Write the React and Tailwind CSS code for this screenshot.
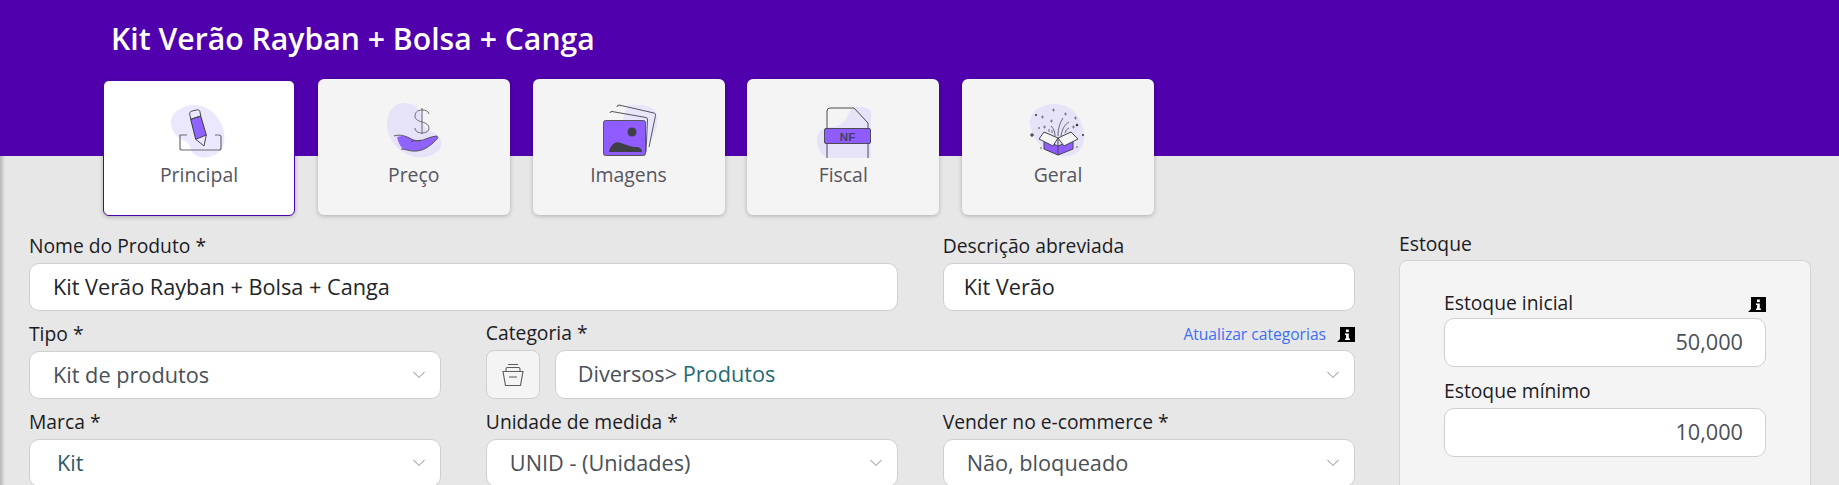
const Chevron = () => (
  <svg width="14" height="8" viewBox="0 0 14 8" fill="none" stroke="#b4b7bb" strokeWidth="1.2" className="shrink-0">
    <path d="M1.5 1l5.5 5.5L12.5 1" />
  </svg>
);

const InfoIcon = () => (
  <svg width="18" height="17" viewBox="0 0 18 17" className="shrink-0">
    <path d="M3 1h15v15H0l3-3z" fill="#000" />
    <rect x="9" y="3.500" width="2.800" height="2.600" fill="#fff" />
    <path d="M8 7.500h3.800v5h1.100v1.500H8v-1.500h1.100V9H8z" fill="#fff" />
  </svg>
);

const PenIcon = () => (
  <svg width="64" height="60" viewBox="0 0 64 60" fill="none">
    <path d="M17 6c11-5 26-1 34 11 7 10 9 24 3 32-7 8-20 10-27 4-4-3-3-10-9-13C9 37 3 28 4 20 5 13 10 9 17 6z" fill="#ebe8fd" />
    <path d="M20 34h-7v13q0 2 2 2h37q2 0 2-2V36q0-2-2-2h-4M30 34h6" stroke="#6b6b70" strokeWidth="1.2" />
    <path d="M23.7 18.3L33.7 15l5.6 19-10.6 4.3z" fill="#8f63ff" stroke="#3d3d42" strokeWidth="1" />
    <path d="M22.7 13.3q-.5-2 1.5-3l6-1.5q2-.2 2.6 1.5l1 4.7-10 3.3z" fill="none" stroke="#4a4a4f" strokeWidth="1" />
    <path d="M28.7 38.3L37 45l2.3-11" stroke="#4a4a4f" strokeWidth="1" />
  </svg>
);

const MoneyIcon = () => (
  <svg width="64" height="60" viewBox="0 0 64 60" fill="none">
    <path d="M22 3c12 0 19 9 19 18 0 6 4 8 10 11 8 4 11 12 6 18-6 7-20 10-30 5C14 50 5 37 5 24 5 12 12 3 22 3z" fill="#e6e3f9" />
    <path d="M40 8v26M47 14c-1-3-3-4-7-4-5 0-7 3-7 6 0 4 4 5 7 6 4 1 7 3 7 6 0 3-3 5-7 5-4 0-7-2-7-5" stroke="#5b5b60" strokeWidth="0.9" />
    <path d="M15 37c5-2 9-1 13 1 3 2 6 4 9 3 6-1 12-5 18-5 1 2 0 3-2 5-5 5-11 10-20 10-3 0-7-1-12-2-4-4-5-8-6-12z" fill="#8f63ff" />
    <path d="M12 36c6-2 12 0 17 3 4 2 8 2 10 1M55 36c-6 0-12 4-18 5-3 0-7-1-8 1M19 49c5 0 10 3 16 2 9-1 15-7 20-12 1-1 1-2 0-3" stroke="#4a4a4f" strokeWidth="0.9" />
  </svg>
);

const ImagesIcon = () => (
  <svg width="64" height="60" viewBox="0 0 64 60" fill="none">
    <path d="M30 6c10-3 24-1 29 6 3 10 1 24-9 32-9 7-24 12-34 9z" fill="#e9e6fb" />
    <path d="M20 7q0-2 2-2l35 8q2 .5 1.500 2.500L52 47" stroke="#55555a" strokeWidth="1" />
    <path d="M13 13q0-1.500 2-1.500l34 6q2 .5 1.500 2.500L49 52" stroke="#55555a" strokeWidth="1" />
    <rect x="6.500" y="20.500" width="42" height="35" rx="2" fill="#8f5cff" stroke="#55555a" strokeWidth="1" />
    <circle cx="35" cy="32" r="4.500" fill="#3f3f46" />
    <path d="M12 52c1-6 6-12 12-9 6 2 10 4 15 4 4 0 6 2 6 5z" fill="#3f3f46" />
  </svg>
);

const NfIcon = () => (
  <svg width="64" height="60" viewBox="0 0 64 60" fill="none">
    <path d="M42 8c8-3 18 0 18 4v46H20C10 58 6 48 6 40c0-8 6-13 14-13 10 0 14-6 17-12 1-3 3-6 5-7z" fill="#e6e3f9" />
    <path d="M16 58V11q0-3 3-3h24l14 15v35" stroke="#4b4b50" strokeWidth="1" />
    <rect x="13.500" y="28.500" width="46" height="15" rx="1.500" fill="#8f5cff" stroke="#4b4b50" strokeWidth="1" />
    <text x="36.500" y="41" textAnchor="middle" fontFamily="'Liberation Sans', sans-serif" fontWeight="700" fontSize="11.500" fill="#45405a">NF</text>
  </svg>
);

const BoxIcon = () => (
  <svg width="64" height="60" viewBox="0 0 64 60" fill="none">
    <path d="M27 4c12-1 23 6 28 18 5 12 4 23-2 29-7 7-19 7-29 2C14 48 6 36 4 24 3 12 14 5 27 4z" fill="#e6e3f9" />
    <path d="M18 40v9l14 6 15-6v-9l-15 6z" fill="#8f5cff" stroke="#45454a" strokeWidth="1" />
    <path d="M32 38v17" stroke="#45454a" strokeWidth="1" />
    <path d="M32 38l-14-6-5 7 14 7z" fill="#f4f4f4" stroke="#45454a" strokeWidth="1" />
    <path d="M32 38l13-6 7 7-14 7z" fill="#f4f4f4" stroke="#45454a" strokeWidth="1" />
    <path d="M29 36c0-4-1-7-4-10M32 36c0-8 2-13 5-18M35 36c1-7 4-12 8-14M26 33v-3M23 32v-3M39 33c1-3 2-4 4-5" stroke="#5b5b60" strokeWidth="0.9" />
    <path d="M15 17h3M16.500 15.500v3M26 10h3M27.500 8.500v3M17 27h3M18.500 25.500v3M38 14h3M39.500 12.500v3M48 18h3M49.500 16.500v3M24 21h3M25.500 19.500v3M46 27h3M47.500 25.500v3" stroke="#77777c" strokeWidth="0.9" />
    <g fill="#2f2f33">
      <circle cx="10" cy="15" r="1" />
      <circle cx="51" cy="25" r="1.200" />
      <circle cx="57" cy="35" r="1" />
      <circle cx="13" cy="28" r="0.800" />
      <circle cx="15" cy="48" r="0.700" />
      <circle cx="51" cy="47" r="0.700" />
    </g>
    <path d="M4 35h4M6 33v4" stroke="#1f1f22" strokeWidth="1" />
  </svg>
);

const tabs = [
  { label: 'Principal', icon: PenIcon, active: true },
  { label: 'Preço', icon: MoneyIcon },
  { label: 'Imagens', icon: ImagesIcon },
  { label: 'Fiscal', icon: NfIcon },
  { label: 'Geral', icon: BoxIcon },
];

const labelClass = 'text-[19.300px] text-[#1c1c24]';

const TextField = ({ label, value, pad = 'px-[23px]' }) => (
  <div>
    <label className={`flex h-[31px] items-center pb-[3px] ${labelClass}`}>{label}</label>
    <div className={`flex h-[48px] items-center rounded-[10px] border border-[#cfcfcf] bg-white text-[21.700px] text-[#212529] ${pad}`}>
      {value}
    </div>
  </div>
);

const SelectField = ({ label, value, indent = 'pl-[23px]', color = 'text-[#495057]' }) => (
  <div>
    <label className={`flex h-[31px] items-center pb-[3px] ${labelClass}`}>{label}</label>
    <div className={`flex h-[48px] items-center justify-between rounded-[10px] border border-[#cfcfcf] bg-white pr-[14px] text-[21.700px] ${indent} ${color}`}>
      <span>{value}</span>
      <Chevron />
    </div>
  </div>
);

export default function App() {
  return (
    <div className="relative h-[485px] overflow-hidden bg-[#e7e7e7] font-['Open_Sans',sans-serif]">
      <div className="absolute inset-y-0 left-0 w-[5px] bg-gradient-to-r from-[#b5b5b5] to-[#e7e7e7]" />

      {/* Purple header with the tabs hanging over it */}
      <div className="relative h-[156px] bg-[#5000ad] pl-[103px]">
        <h1 className="flex h-[79px] items-center pb-[2px] pl-[8px] text-[30.200px] font-semibold text-white">
          Kit Verão Rayban + Bolsa + Canga
        </h1>
        <div className="flex gap-[22.750px]">
          {tabs.map((tab) => {
            const Icon = tab.icon;
            return (
              <div
                key={tab.label}
                className={`flex h-[136px] w-[192px] flex-col items-center rounded-[6px] border pt-[20px] shadow-[0_1px_4px_rgba(0,0,0,0.25)] ${
                  tab.active ? 'translate-y-px border-[#5000ad] bg-white' : 'border-transparent bg-[#f4f4f4]'
                }`}
              >
                <Icon />
                <span className={`text-[19.400px] text-[#56565e] ${tab.active ? '-mt-[1px]' : ''}`}>{tab.label}</span>
              </div>
            );
          })}
        </div>
      </div>

      <div className="mt-[76px] flex items-start gap-[44px] pl-[29px] pr-[28px]">
        {/* Main form */}
        <div className="grid w-[1326px] shrink-0 grid-cols-3 gap-x-[44.500px] gap-y-[9px]">
          <div className="col-span-2">
            <TextField label="Nome do Produto *" value="Kit Verão Rayban + Bolsa + Canga" />
          </div>
          <TextField label="Descrição abreviada" value="Kit Verão" pad="px-[20px]" />

          <SelectField label="Tipo *" value="Kit de produtos" />
          <div className="col-span-2">
            <div className="flex h-[30px] items-center justify-between">
              <label className={`pb-[3px] ${labelClass}`}>Categoria *</label>
              <div className="flex items-center gap-[11px]">
                <span className="text-[15.600px] text-[#3d6ff5]">Atualizar categorias</span>
                <InfoIcon />
              </div>
            </div>
            <div className="flex gap-[15px]">
              <button className="flex h-[49px] w-[54px] shrink-0 items-center justify-center rounded-[8px] border border-[#cfcfcf] bg-[#f4f4f4]">
                <svg width="24" height="24" viewBox="0 0 24 24" fill="none" stroke="#5b5b60" strokeWidth="1.100">
                  <path d="M7 1.500h10M5 8V6q0-1.500 1.500-1.500h11Q19 4.500 19 6v2M2 8.500h20l-2.500 14h-15zM8 14h8" />
                </svg>
              </button>
              <div className="flex h-[49px] flex-1 items-center justify-between rounded-[10px] border border-[#cfcfcf] bg-white pl-[22px] pr-[14px] text-[21.700px] text-[#495057]">
                <span>
                  Diversos&gt; <span className="text-[#1f6b73]">Produtos</span>
                </span>
                <Chevron />
              </div>
            </div>
          </div>

          <SelectField label="Marca *" value="Kit" indent="pl-[27px]" color="text-[#2c5a66]" />
          <SelectField label="Unidade de medida *" value="UNID - (Unidades)" />
          <SelectField label="Vender no e-commerce *" value="Não, bloqueado" />
        </div>

        {/* Stock panel */}
        <div className="flex-1">
          <label className={`flex h-[28px] items-center pb-[3px] ${labelClass}`}>Estoque</label>
          <div className="h-[300px] rounded-[8px] border border-[#d4d4d4] bg-[#f4f4f4] px-[44px] pt-[30px]">
            <div className="flex h-[27px] items-center justify-between">
              <label className={`pb-[3px] ${labelClass}`}>Estoque inicial</label>
              <InfoIcon />
            </div>
            <div className="flex h-[49px] items-center justify-end rounded-[10px] border border-[#cfcfcf] bg-white px-[22px] text-[21.700px] text-[#495057]">
              50,000
            </div>
            <label className={`mt-[10px] flex h-[31px] items-center pb-[3px] ${labelClass}`}>Estoque mínimo</label>
            <div className="flex h-[49px] items-center justify-end rounded-[10px] border border-[#cfcfcf] bg-white px-[22px] text-[21.700px] text-[#495057]">
              10,000
            </div>
          </div>
        </div>
      </div>
    </div>
  );
}
